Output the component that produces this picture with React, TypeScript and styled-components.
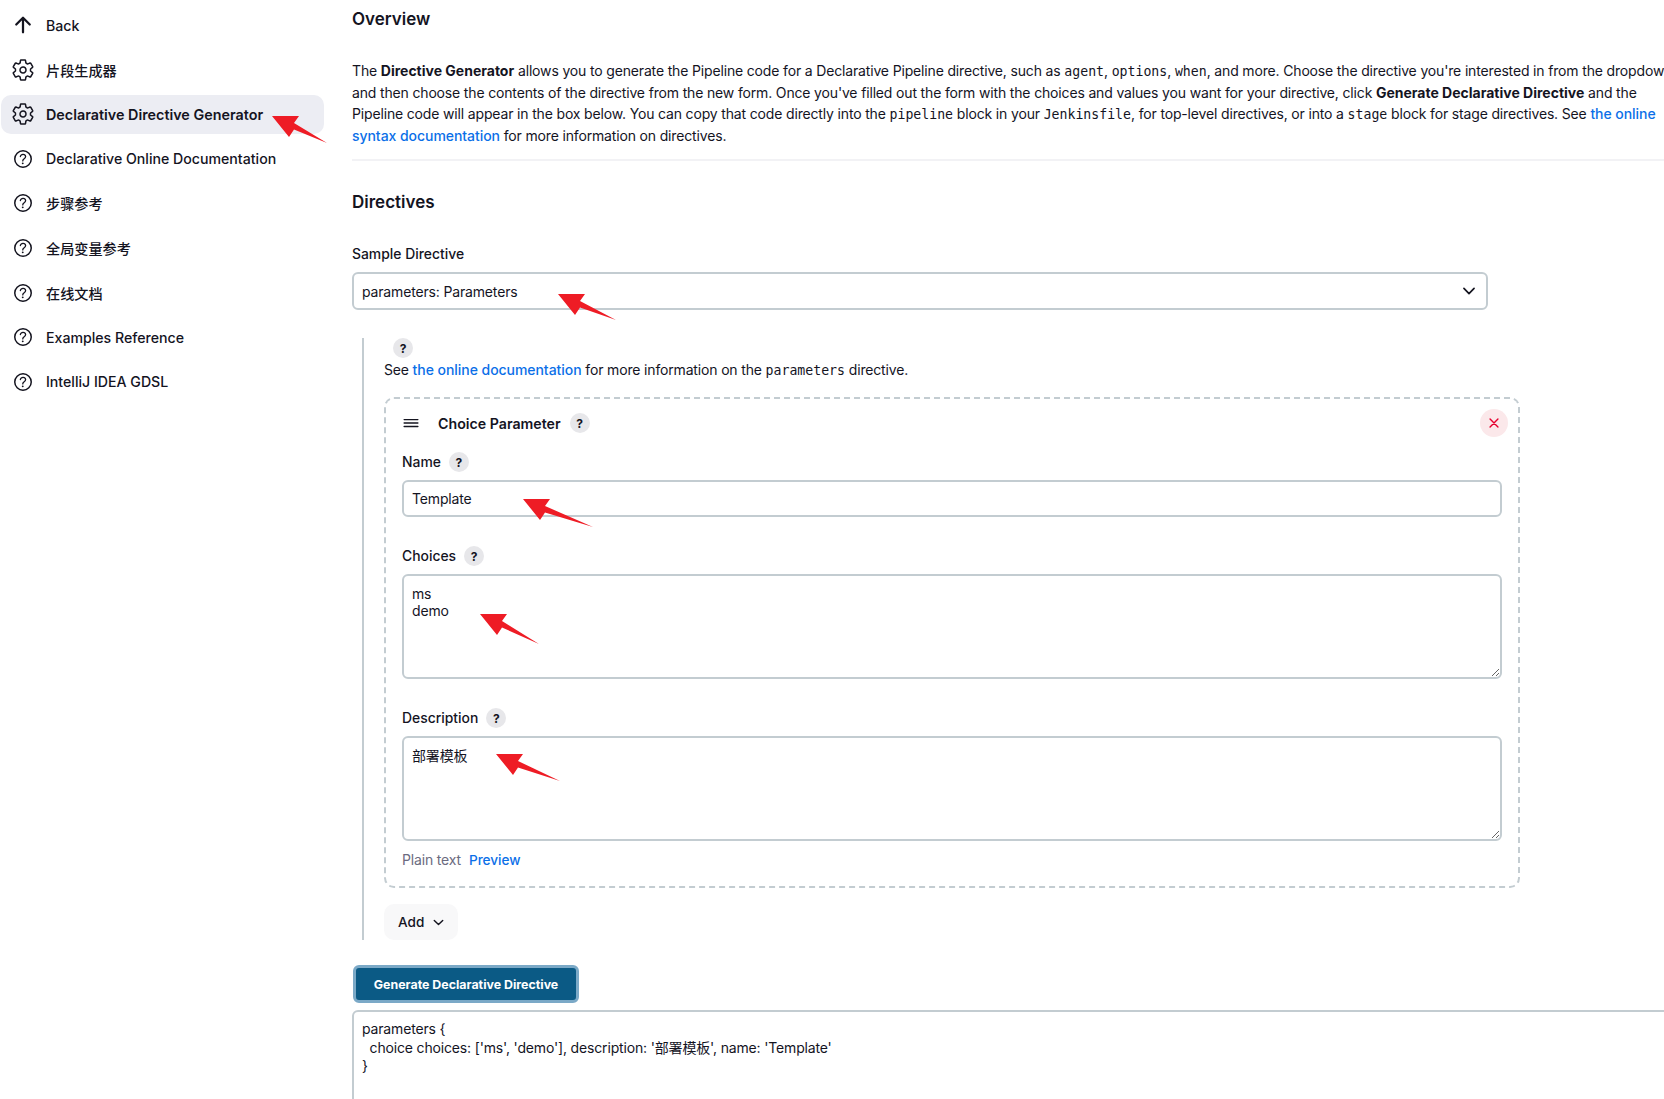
import React from "react";
import styled, { createGlobalStyle } from "styled-components";
import {
  IoArrowUpOutline,
  IoSettingsOutline,
  IoHelpCircleOutline,
  IoChevronDownOutline,
  IoReorderThreeOutline,
  IoCloseOutline,
} from "react-icons/io5";

const FONT = `Inter, "Noto Sans CJK SC", sans-serif`;
const MONO = `"DejaVu Sans Mono", monospace`;
const TEXT = "#14141f";
const BORDER = "#c3ccd1";
const LINK = "#0b6fe8";
const BODY_TYPE = `
  font-size: 14px;
  font-weight: 400;
  letter-spacing: -0.16px;
`;

const Global = createGlobalStyle`
  html, body { margin: 0; padding: 0; background: #fff; }
  body { font-family: ${FONT}; font-size: 14px; color: ${TEXT}; }
  * { box-sizing: border-box; }
`;

const Page = styled.div`
  position: relative;
  width: 1664px;
  height: 1099px;
  overflow: hidden;
  display: grid;
  grid-template-columns: 352px 1fr;
`;

const Sidebar = styled.nav`
  display: flex;
  flex-direction: column;
  gap: 5.6px;
  padding: 5.5px 0 0 1px;
`;

const NavItem = styled.a<{ $active?: boolean }>`
  display: flex;
  align-items: center;
  gap: 11px;
  width: 323px;
  height: 39px;
  padding-left: 10px;
  border-radius: 10px;
  font-size: ${(p) => (p.$active ? 14.35 : 14.15)}px;
  font-weight: ${(p) => (p.$active ? 600 : 500)};
  background: ${(p) => (p.$active ? "#ecedf3" : "transparent")};
  color: ${TEXT};
  white-space: nowrap;
  svg { font-size: 24px; flex: none; }
`;

const Main = styled.main`
  min-width: 0;
  padding-top: 7px;
`;

const Heading = styled.h2<{ $top?: number }>`
  margin: ${(p) => p.$top ?? 0}px 0 0;
  font-size: 17px;
  line-height: 24px;
  font-weight: 600;
`;

const Paragraph = styled.p`
  margin: 29px 0 0;
  line-height: 21.6px;
  white-space: nowrap;
  ${BODY_TYPE}
  b { font-weight: 700; letter-spacing: 0; }
`;

const Code = styled.code`
  font-family: ${MONO};
  font-size: 13.2px;
  line-height: 1;
  letter-spacing: 0;
`;

const Link = styled.a`
  color: ${LINK};
  font-weight: 500;
  letter-spacing: -0.05px;
`;

const Divider = styled.hr`
  margin: 13px 0 0;
  border: 0;
  height: 2px;
  background: #f2f2f5;
`;

const Label = styled.label<{ $top?: number }>`
  display: flex;
  align-items: center;
  gap: 8px;
  height: 20px;
  margin-top: ${(p) => p.$top ?? 0}px;
  font-size: 13.9px;
  font-weight: 500;
`;

const SelectWrap = styled.div`
  position: relative;
  width: 1136px;
  margin-top: 8px;
  svg {
    position: absolute;
    right: 10px;
    top: 10px;
    font-size: 18px;
    pointer-events: none;
  }
`;

const Select = styled.select`
  display: block;
  width: 100%;
  height: 38px;
  padding: 0 8px;
  appearance: none;
  background: #fff;
  border: 2px solid ${BORDER};
  border-radius: 6px;
  font-family: ${FONT};
  ${BODY_TYPE}
  color: ${TEXT};
`;

const ParamBlock = styled.section`
  margin: 28px 0 0 10px;
  padding-left: 20px;
  border-left: 2px solid ${BORDER};
`;

const Help = styled.span`
  display: inline-flex;
  align-items: center;
  justify-content: center;
  flex: none;
  width: 20px;
  height: 20px;
  border-radius: 50%;
  background: #e7e7ea;
  font-size: 12px;
  font-weight: 700;
  color: ${TEXT};
`;

const TopHelp = styled(Help)`
  display: flex;
  margin-left: 9px;
`;

const SeeLine = styled.div`
  margin-top: 2px;
  line-height: 20px;
  white-space: nowrap;
  ${BODY_TYPE}
`;

const Card = styled.div`
  position: relative;
  width: 1136px;
  margin-top: 17px;
  padding: 14px 16px 16px;
  border: 2px dashed ${BORDER};
  border-radius: 10px;
`;

const CardHeader = styled.div`
  display: flex;
  align-items: center;
  height: 20px;
  font-size: 14.2px;
  font-weight: 600;
  svg { font-size: 22px; margin-left: -2px; margin-right: 16px; }
  ${Help} { margin-left: 9px; }
`;

const CloseButton = styled.button`
  position: absolute;
  top: 10px;
  right: 10px;
  width: 28px;
  height: 28px;
  padding: 0;
  display: flex;
  align-items: center;
  justify-content: center;
  border: 0;
  border-radius: 50%;
  background: #fbe8ea;
  color: #e6002e;
  font-size: 18px;
  svg path { stroke-width: 40px; }
`;

const TextInput = styled.input`
  display: block;
  width: 1100px;
  height: 37px;
  margin-top: 8px;
  padding: 0 8px;
  border: 2px solid ${BORDER};
  border-radius: 6px;
  font-family: ${FONT};
  ${BODY_TYPE}
  color: ${TEXT};
`;

const TextArea = styled.textarea`
  display: block;
  width: 1100px;
  height: 105px;
  margin-top: 8px;
  padding: 8.5px 8px;
  border: 2px solid ${BORDER};
  border-radius: 6px;
  font-family: ${FONT};
  ${BODY_TYPE}
  line-height: 17px;
  color: ${TEXT};
  outline: none;
`;

const HintRow = styled.div`
  display: flex;
  gap: 8px;
  height: 20px;
  margin-top: 9px;
  align-items: baseline;
  line-height: 20px;
  color: #6b6b80;
  ${BODY_TYPE}
`;

const PreviewLink = styled(Link)`
  font-size: 13.6px;
`;

const AddButton = styled.button`
  display: flex;
  align-items: center;
  gap: 7px;
  width: 74px;
  height: 36px;
  margin-top: 16px;
  padding: 0 0 0 14px;
  border: 0;
  border-radius: 10px;
  background: #f8f8f9;
  font: 500 13.6px ${FONT};
  color: ${TEXT};
  svg { font-size: 15px; }
`;

const GenerateButton = styled.button`
  display: block;
  width: 226px;
  height: 38px;
  margin: 25px 0 0 1px;
  padding: 0;
  border: 3px solid #7ba9c7;
  border-radius: 6px;
  background: #0b5a85;
  color: #fff;
  font: 700 12.4px ${FONT};
`;

const Output = styled.textarea`
  display: block;
  width: 1400px;
  height: 200px;
  margin-top: 7px;
  padding: 8px 8px;
  border: 2px solid ${BORDER};
  border-radius: 6px;
  font-family: ${FONT};
  ${BODY_TYPE}
  line-height: 18.4px;
  color: ${TEXT};
  outline: none;
`;

const ArrowSvg = styled.svg<{ $x: number; $y: number }>`
  position: absolute;
  left: ${(p) => p.$x}px;
  top: ${(p) => p.$y}px;
  pointer-events: none;
`;

const Arrow = ({ x, y, w, h }: { x: number; y: number; w: number; h: number }) => (
  <ArrowSvg $x={x} $y={y} width={w} height={h} viewBox={`0 0 ${w} ${h}`}>
    <polygon points={`0,0 27,0 22,7 ${w},${h} 22,13.5 17,21`} fill="#ee1c25" />
  </ArrowSvg>
);

const navItems = [
  { label: "Back", icon: <IoArrowUpOutline /> },
  { label: "片段生成器", icon: <IoSettingsOutline /> },
  { label: "Declarative Directive Generator", icon: <IoSettingsOutline />, active: true },
  { label: "Declarative Online Documentation", icon: <IoHelpCircleOutline /> },
  { label: "步骤参考", icon: <IoHelpCircleOutline /> },
  { label: "全局变量参考", icon: <IoHelpCircleOutline /> },
  { label: "在线文档", icon: <IoHelpCircleOutline /> },
  { label: "Examples Reference", icon: <IoHelpCircleOutline /> },
  { label: "IntelliJ IDEA GDSL", icon: <IoHelpCircleOutline /> },
];

export default function App() {
  return (
    <Page>
      <Global />
      <Sidebar>
        {navItems.map((n) => (
          <NavItem key={n.label} $active={n.active}>
            {n.icon}
            {n.label}
          </NavItem>
        ))}
      </Sidebar>
      <Main>
        <Heading>Overview</Heading>
        <Paragraph>
          The <b>Directive Generator</b> allows you to generate the Pipeline code for a Declarative Pipeline directive, such as <Code>agent</Code>, <Code>options</Code>, <Code>when</Code>, and more. Choose the directive you're interested in from the dropdown,
          <br />
          and then choose the contents of the directive from the new form. Once you've filled out the form with the choices and values you want for your directive, click <b>Generate Declarative Directive</b> and the
          <br />
          Pipeline code will appear in the box below. You can copy that code directly into the <Code>pipeline</Code> block in your <Code>Jenkinsfile</Code>, for top-level directives, or into a <Code>stage</Code> block for stage directives. See <Link>the online</Link>
          <br />
          <Link>syntax documentation</Link> for more information on directives.
        </Paragraph>
        <Divider />
        <Heading $top={29}>Directives</Heading>
        <Label $top={30}>Sample Directive</Label>
        <SelectWrap>
          <Select defaultValue="parameters">
            <option value="parameters">parameters: Parameters</option>
          </Select>
          <IoChevronDownOutline />
        </SelectWrap>
        <ParamBlock>
          <TopHelp>?</TopHelp>
          <SeeLine>
            See <Link>the online documentation</Link> for more information on the <Code>parameters</Code> directive.
          </SeeLine>
          <Card>
            <CardHeader>
              <IoReorderThreeOutline />
              Choice Parameter
              <Help>?</Help>
            </CardHeader>
            <CloseButton aria-label="Delete">
              <IoCloseOutline />
            </CloseButton>
            <Label $top={19}>
              Name <Help>?</Help>
            </Label>
            <TextInput defaultValue="Template" />
            <Label $top={29}>
              Choices <Help>?</Help>
            </Label>
            <TextArea defaultValue={"ms\ndemo"} />
            <Label $top={29}>
              Description <Help>?</Help>
            </Label>
            <TextArea defaultValue="部署模板" />
            <HintRow>
              Plain text <PreviewLink>Preview</PreviewLink>
            </HintRow>
          </Card>
          <AddButton>
            Add <IoChevronDownOutline />
          </AddButton>
        </ParamBlock>
        <GenerateButton>Generate Declarative Directive</GenerateButton>
        <Output
          defaultValue={"parameters {\n  choice choices: ['ms', 'demo'], description: '部署模板', name: 'Template'\n}"}
        />
      </Main>
      <Arrow x={272} y={116} w={55} h={27} />
      <Arrow x={558} y={294} w={58} h={26} />
      <Arrow x={523} y={499} w={70} h={28} />
      <Arrow x={480} y={614} w={59} h={30} />
      <Arrow x={496} y={754} w={64} h={27} />
    </Page>
  );
}
